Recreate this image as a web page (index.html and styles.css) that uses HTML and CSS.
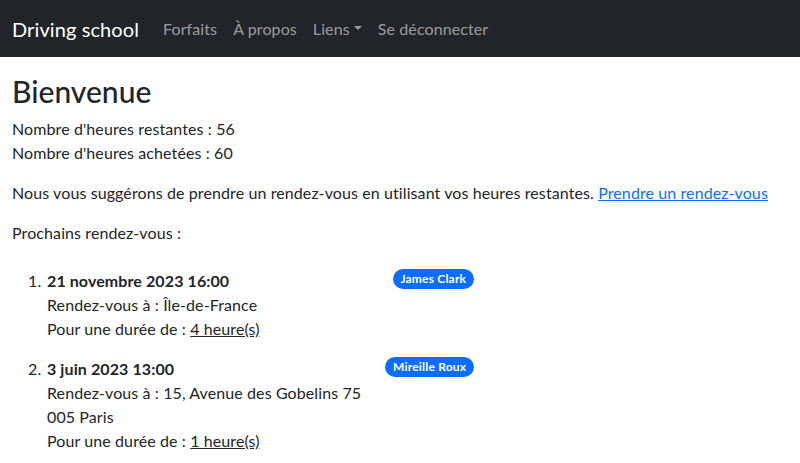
FILE: index.html
```html
<!DOCTYPE html>
<html lang="fr">
<head>
<meta charset="utf-8">
<title>Driving school</title>
<link rel="stylesheet" href="styles.css">
</head>
<body>
<nav class="navbar">
  <div class="nav-inner">
    <a class="brand" href="#">Driving school</a>
    <ul class="nav-links">
      <li><a class="nav-link" href="#">Forfaits</a></li>
      <li><a class="nav-link" href="#">À propos</a></li>
      <li><a class="nav-link dropdown-toggle" href="#">Liens</a></li>
      <li><a class="nav-link" href="#">Se déconnecter</a></li>
    </ul>
  </div>
</nav>
<main class="content">
  <h1 class="title">Bienvenue</h1>
  <p class="stats">Nombre d'heures restantes : 56<br>Nombre d'heures achetées : 60</p>
  <p>Nous vous suggérons de prendre un rendez-vous en utilisant vos heures restantes. <a class="link" href="#">Prendre un rendez-vous</a></p>
  <p>Prochains rendez-vous :</p>
  <ol class="appointments">
    <li class="appt">
      <div class="appt-body">
        <div class="appt-date">21 novembre 2023 16:00</div>
        Rendez-vous à : Île-de-France<br>
        Pour une durée de : <u>4 heure(s)</u>
      </div>
      <span class="badge">James Clark</span>
    </li>
    <li class="appt">
      <div class="appt-body">
        <div class="appt-date">3 juin 2023 13:00</div>
        Rendez-vous à : 15, Avenue des Gobelins 75 005 Paris<br>
        Pour une durée de : <u>1 heure(s)</u>
      </div>
      <span class="badge">Mireille Roux</span>
    </li>
  </ol>
</main>
</body>
</html>
```
FILE: styles.css
```css
* { box-sizing: border-box; }
body {
  margin: 0;
  font-family: Lato, "Noto Sans", sans-serif;
  font-size: 16px;
  line-height: 1.5;
  letter-spacing: 0.1px;
  color: #212529;
  background: #fff;
}
.navbar {
  background: #212529;
  height: 57px;
  display: flex;
  align-items: center;
}
.nav-inner {
  display: flex;
  align-items: center;
  padding: 0 12px;
}
.brand {
  font-size: 20px;
  line-height: 30px;
  padding: 5px 0;
  margin-right: 16px;
  color: #fff;
  text-decoration: none;
}
.nav-links {
  display: flex;
  list-style: none;
  margin: 0;
  padding: 0;
}
.nav-link {
  display: block;
  padding: 8px;
  color: rgba(255, 255, 255, 0.55);
  text-decoration: none;
}
.dropdown-toggle::after {
  content: "";
  display: inline-block;
  margin-left: 0.255em;
  vertical-align: 0.255em;
  border-top: 0.3em solid;
  border-right: 0.3em solid transparent;
  border-left: 0.3em solid transparent;
}
.content {
  padding: 16px 12px 0;
}
.title {
  margin: 0 0 8px;
  font-size: 30px;
  font-weight: 500;
  line-height: 1.2;
  letter-spacing: 0;
}
p { margin: 0 0 16px; }
.link { color: #0d6efd; }
.appointments {
  list-style: none;
  counter-reset: appt;
  margin: 0;
  padding: 0;
  width: 478px;
}
.appt {
  counter-increment: appt;
  display: flex;
  justify-content: space-between;
  align-items: flex-start;
  padding: 8px 16px;
}
.appt::before {
  content: counter(appt) ".";
  width: 12px;
}
.appt-body {
  margin-left: 7px;
  margin-right: auto;
}
.appt-date { font-weight: 700; }
.badge {
  display: inline-block;
  padding: 0.35em 0.65em;
  font-size: 12px;
  font-weight: 700;
  line-height: 1;
  letter-spacing: 0.2px;
  color: #fff;
  background: #0d6efd;
  border-radius: 50rem;
  white-space: nowrap;
}
```
